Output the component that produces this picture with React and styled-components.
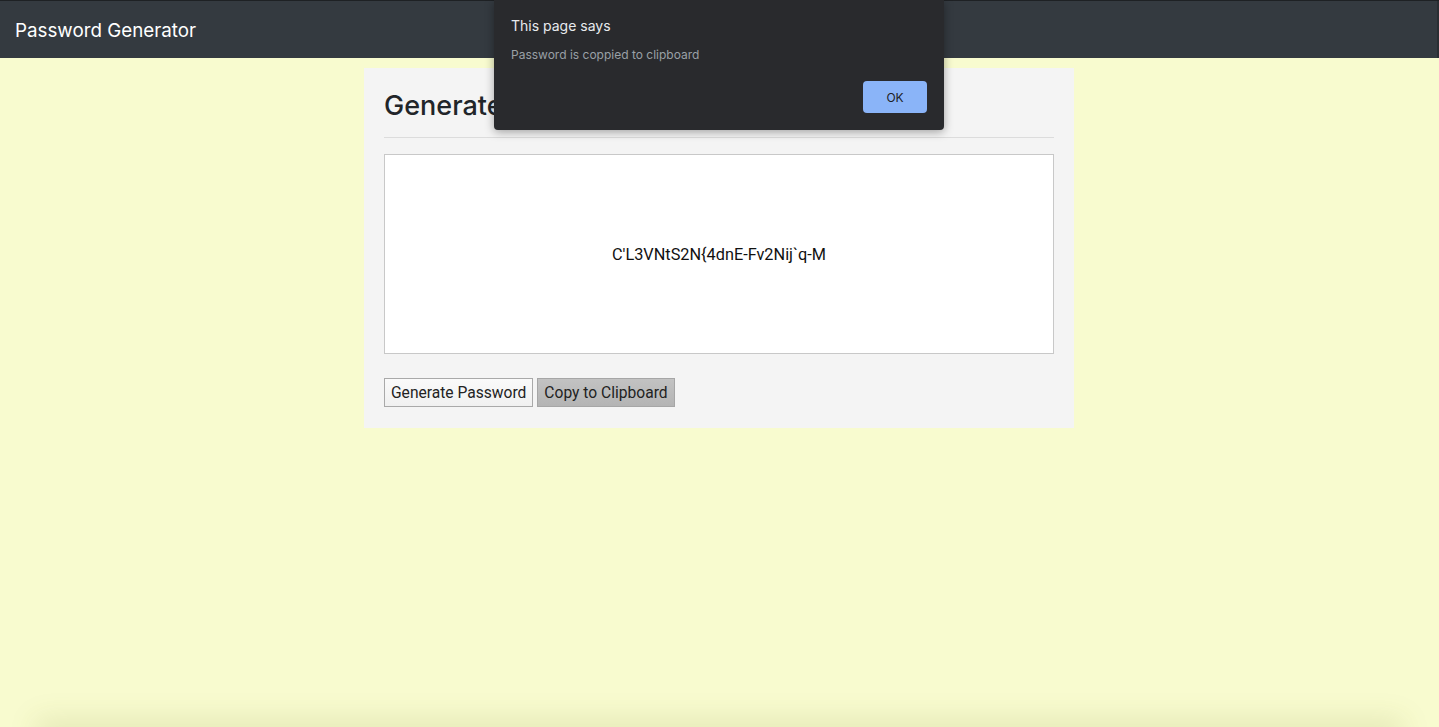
import React from 'react';
import styled, {createGlobalStyle} from 'styled-components';

const GlobalStyle = createGlobalStyle`
    html, body {
        margin:0;
        padding:0;
        height:100%;
        overflow:hidden;
    }
    body{
        background:#f8fbcf;
        font-family: Inter, "Noto Sans", Roboto, sans-serif;
        color:#212529;
    }
`

function App() {
    const password = "C'L3VNtS2N{4dnE-Fv2Nij`q-M";

    return (
        <Page>
            <GlobalStyle/>
            <Navbar>
                <Brand>Password Generator</Brand>
                <Scrollbar/>
            </Navbar>
            <Main>
                <Card>
                    <Title>Generate Password</Title>
                    <Divider/>
                    <Output>{password}</Output>
                    <Actions>
                        <Button>Generate Password</Button>
                        <Button active>Copy to Clipboard</Button>
                    </Actions>
                </Card>
            </Main>
            <Alert>
                <AlertTitle>This page says</AlertTitle>
                <AlertText>Password is coppied to clipboard</AlertText>
                <AlertFooter>
                    <OkButton>OK</OkButton>
                </AlertFooter>
            </Alert>
            <BottomShade/>
        </Page>
    )
}

export default App

const Page = styled.div`
    position:relative;
    min-height:727px;
`

const Navbar = styled.nav`
    position:relative;
    height:57px;
    background:#343a40;
    border-top:1px solid #1e2124;
    display:flex;
    align-items:center;
    padding:0 15px;
`

const Brand = styled.span`
    color:#fff;
    font-size:18.8px;
    font-weight:400;
    margin-top:1px;
`

const Scrollbar = styled.div`
    position:absolute;
    right:0;
    top:0;
    bottom:0;
    width:2px;
    background:#2a2e33;
`

const Main = styled.main`
    display:flex;
    justify-content:center;
    padding:10px 1px 0 0;
`

const Card = styled.section`
    width:670px;
    padding:20px 20px 21px;
    background:#f4f4f4;
`

const Title = styled.h1`
    margin:0;
    height:36px;
    line-height:36px;
    font-size:27px;
    font-weight:500;
    color:#212529;
`

const Divider = styled.hr`
    margin:13px 0 16px;
    border:0;
    border-top:1px solid #dcdcdc;
`

const Output = styled.div`
    height:198px;
    border:1px solid #c8c8c8;
    background:#fff;
    display:flex;
    align-items:center;
    justify-content:center;
    font-family: Roboto, "Liberation Sans", sans-serif;
    font-size:16.3px;
    color:#111;
`

const Actions = styled.div`
    display:flex;
    gap:4px;
    margin-top:24px;
`

const Button = styled.button`
    height:29px;
    padding:0 6px;
    font-family: Roboto, "Liberation Sans", sans-serif;
    font-size:15.6px;
    color:#222;
    border:1px solid ${props => props.active ? '#a6a6a6' : '#a9a9a9'};
    background:${props => props.active ? 'linear-gradient(#c2c2c2, #b4b4b4)' : 'linear-gradient(#fafafa, #f0f0f0)'};
    border-radius:0;
`

const Alert = styled.div`
    position:absolute;
    top:0;
    left:494px;
    width:450px;
    height:130px;
    box-sizing:border-box;
    padding:17px 17px 0;
    background:#292a2d;
    border-radius:0 0 4px 4px;
    box-shadow:0 2px 10px rgba(0,0,0,0.35);
    display:flex;
    flex-direction:column;
`

const AlertTitle = styled.div`
    color:#e8eaed;
    font-size:14px;
    line-height:18px;
`

const AlertText = styled.div`
    margin-top:12px;
    color:#9aa0a6;
    font-size:12px;
    line-height:16px;
`

const AlertFooter = styled.div`
    display:flex;
    justify-content:flex-end;
    margin-top:18px;
`

const OkButton = styled.button`
    width:64px;
    height:32px;
    border:0;
    border-radius:4px;
    background:#8ab4f8;
    color:#202124;
    font-family: Inter, "Noto Sans", Roboto, sans-serif;
    font-size:12px;
`

const BottomShade = styled.div`
    position:absolute;
    left:40px;
    right:40px;
    top:727px;
    height:20px;
    box-shadow:0 -4px 28px 4px rgba(120,130,40,0.15);
`
